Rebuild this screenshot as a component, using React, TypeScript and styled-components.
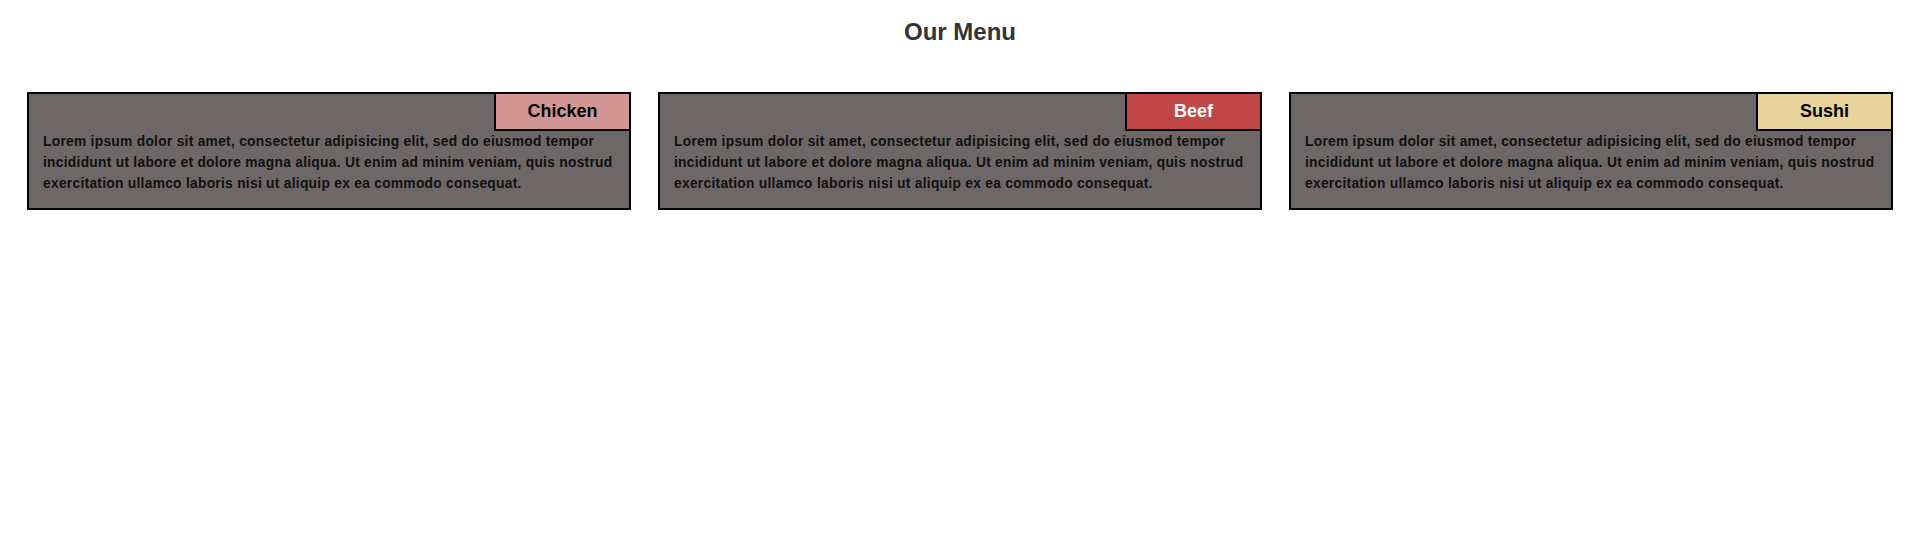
import React from "react";
import styled, { createGlobalStyle } from "styled-components";

const GlobalStyle = createGlobalStyle`
  html, body {
    margin: 0;
    padding: 0;
    background: #ffffff;
    font-family: "Liberation Sans", Arial, sans-serif;
  }
`;

const Page = styled.div`
  padding: 18px 18px 0 27px;
`;

const Title = styled.h2`
  margin: 0 0 46px;
  text-align: center;
  font-size: 24px;
  font-weight: 700;
  color: #333333;
`;

const Grid = styled.div`
  display: grid;
  grid-template-columns: repeat(3, 1fr);
  gap: 27px;
`;

const Card = styled.div`
  display: flex;
  flex-direction: column;
  border: 2px solid #000;
  background: #6d6767;
`;

const TagRow = styled.div`
  display: flex;
  justify-content: flex-end;
  margin: -2px -2px 0 0;
`;

const Tag = styled.div<{ $bg: string; $fg: string }>`
  box-sizing: border-box;
  width: 137px;
  border: 2px solid #000;
  padding: 7px 0;
  text-align: center;
  font-size: 18px;
  font-weight: 700;
  background: ${(p) => p.$bg};
  color: ${(p) => p.$fg};
`;

const Text = styled.p`
  margin: 0;
  padding: 0 11px 14px 14px;
  font-size: 13.8px;
  line-height: 21px;
  letter-spacing: 0.27px;
  font-weight: 700;
  color: #111;
`;

const LOREM =
  "Lorem ipsum dolor sit amet, consectetur adipisicing elit, sed do eiusmod tempor incididunt ut labore et dolore magna aliqua. Ut enim ad minim veniam, quis nostrud exercitation ullamco laboris nisi ut aliquip ex ea commodo consequat.";

const items = [
  { name: "Chicken", bg: "#d49595", fg: "#000" },
  { name: "Beef", bg: "#c14747", fg: "#fff" },
  { name: "Sushi", bg: "#e8d39b", fg: "#000" },
];

export default function App() {
  return (
    <>
      <GlobalStyle />
      <Page>
        <Title>Our Menu</Title>
        <Grid>
          {items.map((it) => (
            <Card key={it.name}>
              <TagRow>
                <Tag $bg={it.bg} $fg={it.fg}>{it.name}</Tag>
              </TagRow>
              <Text>{LOREM}</Text>
            </Card>
          ))}
        </Grid>
      </Page>
    </>
  );
}
